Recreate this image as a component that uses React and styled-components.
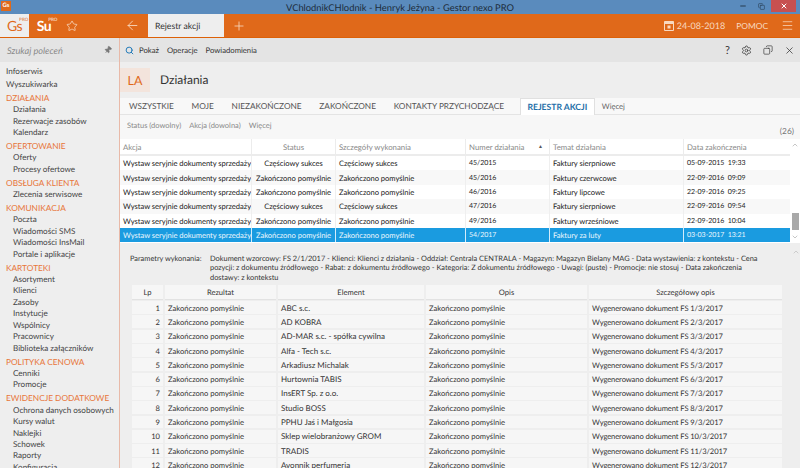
import React from "react";
import styled, { createGlobalStyle } from "styled-components";
import { ArrowLeft, Copy, Menu, Minus, Pin, Plus, Search, Settings, Star, X, ChevronUp, ChevronDown } from "lucide-react";

const FONT = `Lato, "Open Sans", "Liberation Sans", sans-serif`;

const sidebar = [
  { items: ["Infoserwis", "Wyszukiwarka"], top: true },
  { title: "DZIAŁANIA", items: ["Działania", "Rezerwacje zasobów", "Kalendarz"] },
  { title: "OFERTOWANIE", items: ["Oferty", "Procesy ofertowe"] },
  { title: "OBSŁUGA KLIENTA", items: ["Zlecenia serwisowe"] },
  { title: "KOMUNIKACJA", items: ["Poczta", "Wiadomości SMS", "Wiadomości InsMail", "Portale i aplikacje"] },
  { title: "KARTOTEKI", items: ["Asortyment", "Klienci", "Zasoby", "Instytucje", "Wspólnicy", "Pracownicy", "Biblioteka załączników"] },
  { title: "POLITYKA CENOWA", items: ["Cenniki", "Promocje"] },
  { title: "EWIDENCJE DODATKOWE", items: ["Ochrona danych osobowych", "Kursy walut", "Naklejki", "Schowek", "Raporty", "Konfiguracja"] },
];

const tabs = ["WSZYSTKIE", "MOJE", "NIEZAKOŃCZONE", "ZAKOŃCZONE", "KONTAKTY PRZYCHODZĄCE"];

const OK = "Zakończono pomyślnie";
const PART = "Częściowy sukces";
const ACTION = "Wystaw seryjnie dokumenty sprzedaży";
const actions = [
  [PART, "45/2015", "Faktury sierpniowe", "05-09-2015  19:33"],
  [OK, "45/2016", "Faktury czerwcowe", "22-09-2016  09:09"],
  [OK, "46/2016", "Faktury lipcowe", "22-09-2016  09:25"],
  [PART, "47/2016", "Faktury sierpniowe", "22-09-2016  09:54"],
  [OK, "49/2016", "Faktury wrześniowe", "22-09-2016  10:04"],
  [OK, "54/2017", "Faktury za luty", "03-03-2017  13:21"],
];

const elements = [
  "ABC s.c.", "AD KOBRA", "AD-MAR s.c. - spółka cywilna", "Alfa - Tech s.c.", "Arkadiusz Michalak",
  "Hurtownia TABIS", "InsERT Sp. z o.o.", "Studio BOSS", "PPHU Jaś i Małgosia",
  "Sklep wielobranżowy GROM", "TRADIS", "Avonnik perfumeria",
];

const GlobalStyle = createGlobalStyle`
  html, body { margin: 0; padding: 0; }
  body { font-family: ${FONT}; background: #eeeeee; text-rendering: geometricPrecision; }
  * { box-sizing: border-box; }
`;

const Page = styled.div`
  width: 800px;
  height: 468px;
  overflow: hidden;
  display: flex;
  flex-direction: column;
  background: #eeeeee;
  color: #333;
  font-size: 7.6px;
`;

const TitleBar = styled.div`
  height: 14px;
  flex: none;
  background: #5a8bbd;
  display: flex;
  align-items: center;
  position: relative;
  color: #1d2b3a;
  font-size: 9.35px;
  justify-content: center;
`;

const AppIcon = styled.div`
  position: absolute;
  left: 1px;
  top: 1px;
  width: 10px;
  height: 10px;
  background: #e0691a;
  color: #fff;
  font-size: 6px;
  font-weight: 700;
  line-height: 10px;
  text-align: center;
`;

const WindowButtons = styled.div`
  position: absolute;
  right: 4px;
  top: 0;
  height: 12px;
  display: flex;
  align-items: center;
  color: #1d2b3a;
`;

const WindowButton = styled.div`
  width: ${(p) => (p.$close ? "25px" : "19px")};
  height: 12px;
  display: flex;
  align-items: center;
  justify-content: center;
  background: ${(p) => (p.$close ? "#c75050" : "transparent")};
  color: ${(p) => (p.$close ? "#fff" : "#1d2b3a")};
`;

const TopBar = styled.div`
  height: 24px;
  flex: none;
  background: #e0691a;
  border-bottom: 1px solid #dd6108;
  display: flex;
  align-items: stretch;
  color: #f8d9c0;
`;

const GsTab = styled.div`
  width: 29px;
  background: #eeeeee;
  color: #e0691a;
  display: flex;
  align-items: center;
  justify-content: center;
`;

const SuTab = styled.div`
  width: 30px;
  color: #fff;
  display: flex;
  align-items: center;
  justify-content: center;
`;

const Logo = styled.span`
  font-size: 14px;
  font-weight: ${(p) => (p.$bold ? 700 : 400)};
  position: relative;
  line-height: 1;
  letter-spacing: -0.5px;
  & > small {
    position: absolute;
    left: 100%;
    top: -1px;
    margin-left: -3px;
    font-size: 4.5px;
    font-weight: 700;
    letter-spacing: 0;
    opacity: 0.7;
  }
`;

const BarIcon = styled.div`
  display: flex;
  align-items: center;
  justify-content: center;
  width: ${(p) => p.$w}px;
  flex: none;
`;

const ActiveTab = styled.div`
  width: 76px;
  background: #eeeeee;
  color: #333;
  font-size: 8.7px;
  display: flex;
  align-items: center;
  padding-left: 7px;
`;

const TopRight = styled.div`
  margin-left: auto;
  display: flex;
  align-items: center;
  font-size: 9px;
  padding-right: 6px;
`;

const DateBox = styled.div`
  display: flex;
  align-items: center;
  gap: 3px;
  margin-right: 11px;
`;

const Help = styled.span`
  margin-right: 13px;
  font-size: 8.4px;
`;

const Body = styled.div`
  flex: 1;
  min-height: 0;
  display: flex;
`;

const Sidebar = styled.aside`
  width: 120px;
  flex: none;
  background: #eeeeee;
  border-right: 1px solid #e8b9a8;
  overflow: hidden;
`;

const SearchRow = styled.div`
  height: 24px;
  background: #e4e4e4;
  display: flex;
  align-items: center;
  justify-content: space-between;
  padding: 0 7px;
  color: #8a8a8a;
  font-size: 9.2px;
  font-style: italic;
`;

const NavList = styled.nav`
  padding-top: 3px;
`;

const NavGroup = styled.div`
  margin-bottom: 1.5px;
`;

const NavHeading = styled.div`
  height: 12.4px;
  line-height: 12.4px;
  padding-left: 6px;
  color: #e8763a;
  font-size: 8.3px;
  white-space: nowrap;
`;

const NavItem = styled.div`
  height: ${(p) => (p.$top ? "12.6px" : "11.45px")};
  line-height: ${(p) => (p.$top ? "12.6px" : "11.45px")};
  padding-left: ${(p) => (p.$top ? "6px" : "13px")};
  color: #444;
  font-size: 8.1px;
  white-space: nowrap;
`;

const Main = styled.main`
  flex: 1;
  min-width: 0;
  display: flex;
  flex-direction: column;
`;

const Toolbar = styled.div`
  height: 24px;
  flex: none;
  background: #e4e4e4;
  display: flex;
  align-items: center;
  padding: 0 5px 0 5px;
  font-size: 7.7px;
  color: #333;
`;

const ToolLink = styled.span`
  margin-left: ${(p) => p.$gap || 8}px;
`;

const ToolIcons = styled.div`
  margin-left: auto;
  display: flex;
  align-items: center;
  gap: 11px;
  color: #333;
  font-size: 11px;
`;

const Heading = styled.div`
  height: 36px;
  flex: none;
  display: flex;
  padding-top: 6px;
  align-items: flex-start;
`;

const Badge = styled.div`
  width: 30px;
  height: 24px;
  background: #f3e4dc;
  color: #e0691a;
  font-size: 12.5px;
  display: flex;
  align-items: center;
  justify-content: center;
`;

const HeadingTitle = styled.div`
  margin-left: 10px;
  height: 24px;
  line-height: 23px;
  font-size: 12px;
  color: #333;
`;

const TabRow = styled.div`
  height: 17px;
  flex: none;
  background: #f8f8f8;
  border-bottom: 1px solid #e4e4e4;
  display: flex;
  align-items: stretch;
  gap: 17.8px;
  padding-left: 9px;
  font-size: 8.25px;
  color: #555;
`;

const TabItem = styled.div`
  display: flex;
  align-items: center;
  white-space: nowrap;
`;

const SelectedTab = styled.div`
  width: 75px;
  height: 17px;
  background: #fff;
  border: 1px solid #e0e0e0;
  border-bottom: none;
  color: #1f6fa8;
  font-weight: 700;
  font-size: 8.6px;
  display: flex;
  align-items: center;
  justify-content: center;
  white-space: nowrap;
  margin-left: -2px;
`;

const MoreTab = styled.div`
  margin-left: -10.8px;
  display: flex;
  align-items: center;
  font-size: 7.6px;
  color: #666;
`;

const FilterRow = styled.div`
  height: 24px;
  flex: none;
  background: #f7f7f7;
  display: flex;
  align-items: flex-start;
  padding: 6px 6px 0 7px;
  gap: 8px;
  font-size: 7.5px;
  color: #8a8a8a;
  position: relative;
`;

const Count = styled.span`
  position: absolute;
  right: 6px;
  top: 11px;
  font-size: 8.4px;
  color: #777;
`;

const GridArea = styled.div`
  height: 104px;
  flex: none;
  display: flex;
  background: #fff;
`;

const GridColumn = styled.div`
  width: 670px;
  flex: none;
`;

const Row = styled.div`
  display: grid;
  grid-template-columns: ${(p) => p.$cols};
  height: 14.4px;
  align-items: stretch;
  white-space: nowrap;
`;

const ActionHeader = styled(Row)`
  height: 17px;
  color: #888;
  font-size: 7.8px;
  border-bottom: 2px solid #ececec;
`;

const ActionRow = styled(Row)`
  background: ${(p) => (p.$selected ? "#1a9be0" : p.$odd ? "#f8f8f8" : "#fff")};
  color: ${(p) => (p.$selected ? "#eaf6fd" : "#222")};
  font-size: 7.6px;
  letter-spacing: -0.04px;
`;

const Cell = styled.div`
  display: flex;
  align-items: center;
  justify-content: ${(p) => p.$align || "flex-start"};
  padding: 0 3px;
  border-right: ${(p) => (p.$line ? `1px solid ${p.$line}` : "none")};
  overflow: hidden;
`;

const ElementCell = styled(Cell)`
  font-size: 8px;
`;

const DocumentCell = styled(Cell)`
  letter-spacing: -0.1px;
`;

const Digits = styled.span`
  white-space: pre;
  font-size: 7px;
`;

const SortMark = styled.span`
  margin-left: auto;
  margin-right: 3px;
  font-size: 5px;
  color: #555;
`;

const ScrollTrack = styled.div`
  flex: 1;
  display: flex;
  flex-direction: column;
  align-items: center;
  color: #aaa;
`;

const Thumb = styled.div`
  width: 7px;
  height: 17px;
  margin-top: auto;
  background: #a9a9a9;
`;

const Details = styled.section`
  flex: 1;
  min-height: 0;
  position: relative;
  overflow: hidden;
  padding: 10px 0 0 10px;
`;

const Params = styled.div`
  display: grid;
  grid-template-columns: 80px 1fr;
  width: 660px;
  height: 32px;
  padding-top: 0.6px;
  font-size: 7.4px;
  line-height: 9.7px;
  color: #333;
  white-space: pre;
`;

const DetailTable = styled.div`
  margin-left: 2px;
  width: 650px;
`;

const DetailHeader = styled(Row)`
  height: 15px;
  gap: 2px;
  font-size: 7.6px;
  color: #333;
  background: #eeeeee;
  margin-bottom: 1.2px;
  & > div {
    background: #f6f6f6;
    border-bottom: 1px solid #e2e2e2;
  }
`;

const DetailRow = styled(Row)`
  height: 14.3px;
  gap: 2px;
  font-size: 7.6px;
  color: #333;
  padding-bottom: 1.4px;
  & > div {
    background: #f6f6f6;
  }
`;

const DetailScroll = styled.div`
  position: absolute;
  right: 0;
  top: 5px;
  width: 8px;
  color: #bbb;
  display: flex;
  justify-content: center;
`;

const ACTION_COLS = "132px 84px 130px 84px 134px 106px";
const DETAIL_COLS = "31px 111px 146px 161px 1fr";

function App() {
  return (
    <Page>
      <GlobalStyle />
      <TitleBar>
        <AppIcon>Gs</AppIcon>
        VChlodnikCHlodnik - Henryk Jeżyna - Gestor nexo PRO
        <WindowButtons>
          <WindowButton><Minus size={8} strokeWidth={2.5} /></WindowButton>
          <WindowButton><Copy size={7} strokeWidth={1.6} /></WindowButton>
          <WindowButton $close><X size={8} strokeWidth={3} /></WindowButton>
        </WindowButtons>
      </TitleBar>

      <TopBar>
        <GsTab><Logo>Gs<small>PRO</small></Logo></GsTab>
        <SuTab><Logo $bold>Su<small>PRO</small></Logo></SuTab>
        <BarIcon $w={25}><Star size={12} strokeWidth={1.6} /></BarIcon>
        <BarIcon $w={64}><ArrowLeft size={15} strokeWidth={1.4} style={{ marginLeft: 32 }} /></BarIcon>
        <ActiveTab>Rejestr akcji</ActiveTab>
        <BarIcon $w={30}><Plus size={14} strokeWidth={1.4} /></BarIcon>
        <TopRight>
          <DateBox>
            <svg width="10" height="11" viewBox="0 0 10 11">
              <path d="M0.5 1.5h9v9h-9z" fill="none" stroke="currentColor" />
              <path d="M0.5 1.5h9v2.5h-9z" fill="currentColor" />
              <rect x="3.5" y="5.5" width="3" height="3" fill="currentColor" />
            </svg>
            24-08-2018
          </DateBox>
          <Help>POMOC</Help>
          <Menu size={13} strokeWidth={1.4} />
        </TopRight>
      </TopBar>

      <Body>
        <Sidebar>
          <SearchRow>
            Szukaj poleceń
            <Pin size={8} color="#777" fill="#777" style={{ transform: "rotate(40deg)" }} />
          </SearchRow>
          <NavList>
            {sidebar.map((group, i) => (
              <NavGroup key={i}>
                {group.title && <NavHeading>{group.title}</NavHeading>}
                {group.items.map((item) => (
                  <NavItem key={item} $top={group.top}>{item}</NavItem>
                ))}
              </NavGroup>
            ))}
          </NavList>
        </Sidebar>

        <Main>
          <Toolbar>
            <Search size={9} color="#1f78b8" strokeWidth={2.6} />
            <ToolLink $gap={5}>Pokaż</ToolLink>
            <ToolLink>Operacje</ToolLink>
            <ToolLink>Powiadomienia</ToolLink>
            <ToolIcons>
              <span>?</span>
              <Settings size={11} strokeWidth={1.6} />
              <Copy size={10} strokeWidth={1.6} style={{ transform: "scaleX(-1)" }} />
              <X size={11} strokeWidth={1.6} />
            </ToolIcons>
          </Toolbar>

          <Heading>
            <Badge>LA</Badge>
            <HeadingTitle>Działania</HeadingTitle>
          </Heading>

          <TabRow>
            {tabs.map((t) => (
              <TabItem key={t}>{t}</TabItem>
            ))}
            <SelectedTab>REJESTR AKCJI</SelectedTab>
            <MoreTab>Więcej</MoreTab>
          </TabRow>

          <FilterRow>
            <span>Status (dowolny)</span>
            <span>Akcja (dowolna)</span>
            <span>Więcej</span>
            <Count>(26)</Count>
          </FilterRow>

          <GridArea>
            <GridColumn>
              <ActionHeader $cols={ACTION_COLS}>
                <Cell $line="#ececec">Akcja</Cell>
                <Cell $line="#ececec" $align="center">Status</Cell>
                <Cell $line="#ececec">Szczegóły wykonania</Cell>
                <Cell $line="#ececec">Numer działania<SortMark>▲</SortMark></Cell>
                <Cell $line="#ececec">Temat działania</Cell>
                <Cell>Data zakończenia</Cell>
              </ActionHeader>
              {actions.map(([status, nr, topic, date], i) => {
                const line = i === 5 ? "#d4ecfa" : "#efefef";
                return (
                  <ActionRow key={nr} $cols={ACTION_COLS} $odd={i % 2 === 1} $selected={i === 5}>
                    <Cell $line={line}>{ACTION}</Cell>
                    <Cell $line={line} $align="center">{status}</Cell>
                    <Cell $line={line}>{status}</Cell>
                    <Cell $line={line}><Digits>{nr}</Digits></Cell>
                    <Cell $line={line}>{topic}</Cell>
                    <Cell><Digits>{date}</Digits></Cell>
                  </ActionRow>
                );
              })}
            </GridColumn>
            <ScrollTrack>
              <ChevronUp size={8} style={{ marginTop: 2 }} />
              <Thumb />
              <ChevronDown size={8} style={{ margin: "3px 0 2px" }} />
            </ScrollTrack>
          </GridArea>

          <Details>
            <DetailScroll><ChevronUp size={8} /></DetailScroll>
            <Params>
              <span>Parametry wykonania:</span>
              <span>
                {"Dokument wzorcowy: FS 2/1/2017 - Klienci: Klienci z działania - Oddział: Centrala CENTRALA - Magazyn: Magazyn Bielany MAG - Data wystawienia: z kontekstu - Cena\npozycji: z dokumentu źródłowego - Rabat: z dokumentu źródłowego - Kategoria: Z dokumentu źródłowego - Uwagi: (puste) - Promocje: nie stosuj - Data zakończenia\ndostawy: z kontekstu"}
              </span>
            </Params>
            <DetailTable>
              <DetailHeader $cols={DETAIL_COLS}>
                <Cell $align="center">Lp</Cell>
                <Cell $align="center">Rezultat</Cell>
                <Cell $align="center">Element</Cell>
                <Cell $align="center">Opis</Cell>
                <Cell $align="center">Szczegółowy opis</Cell>
              </DetailHeader>
              {elements.map((name, i) => (
                <DetailRow key={name} $cols={DETAIL_COLS}>
                  <Cell $align="flex-end">{i + 1}</Cell>
                  <Cell>{OK}</Cell>
                  <ElementCell>{name}</ElementCell>
                  <Cell>{OK}</Cell>
                  <DocumentCell>Wygenerowano dokument FS {i + 1}/3/2017</DocumentCell>
                </DetailRow>
              ))}
            </DetailTable>
          </Details>
        </Main>
      </Body>
    </Page>
  );
}

export default App;
